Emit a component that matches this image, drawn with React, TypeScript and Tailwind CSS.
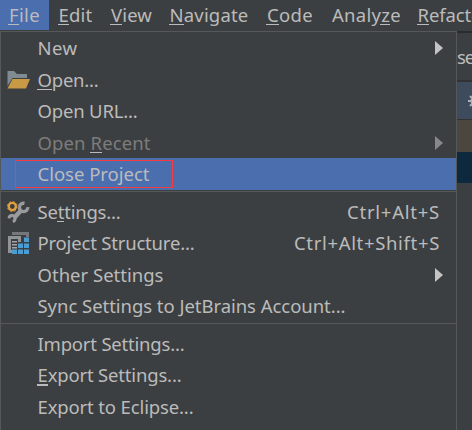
import { useLayoutEffect, useRef, type ReactNode } from "react";
import clsx from "clsx";

// Text run tracked so that it fills a fixed advance width.
function Label({ text, mnemonic = -1, width, thick = false }: { text: string; mnemonic?: number; width: number; thick?: boolean }) {
  const ref = useRef<HTMLSpanElement>(null);
  useLayoutEffect(() => {
    const el = ref.current;
    if (!el) return;
    el.style.letterSpacing = "0px";
    const natural = el.getBoundingClientRect().width;
    el.style.letterSpacing = `${(width - natural) / text.length}px`;
  }, [text, width]);
  return (
    <span ref={ref} className="inline-block whitespace-pre">
      {mnemonic < 0 ? (
        text
      ) : (
        <>
          {text.slice(0, mnemonic)}
          <span className={clsx("relative inline-block after:absolute after:-left-px after:right-0 after:bg-[#bbbbbb]", thick ? "after:bottom-[2px] after:h-[2px]" : "after:bottom-[3px] after:h-px")}>
            {text[mnemonic]}
          </span>
          {text.slice(mnemonic + 1)}
        </>
      )}
    </span>
  );
}

function FolderIcon() {
  return (
    <svg width="24" height="20" viewBox="0 0 24 20">
      <path d="M.5 1H7l3 3h10v4H5.500L.500 16z" fill="#7f8b91" />
      <path d="M5.500 9H23l-4 9.500H.500z" fill="#c99a45" />
    </svg>
  );
}

function SettingsIcon() {
  return (
    <svg width="24" height="24" viewBox="0 0 24 24" fill="none">
      <path d="M14.500 10 7.500 17.500" stroke="#999b9d" strokeWidth="4.500" />
      <path d="M17.500 3.300A4.200 4.200 0 1 0 20.800 7.200" stroke="#999b9d" strokeWidth="3.400" />
      <path d="M2 18.300A3 3 0 1 1 5.800 21.500" stroke="#999b9d" strokeWidth="3" />
      <circle cx="5.300" cy="6.500" r="6" fill="#3c3f41" />
      <circle cx="5.300" cy="6.500" r="3.600" stroke="#e0a03f" strokeWidth="2.400" />
      <circle cx="5.300" cy="6.500" r="5" stroke="#c88a35" strokeWidth="1" strokeDasharray="2 1.927" />
    </svg>
  );
}

function StructureIcon() {
  return (
    <svg width="24" height="24" viewBox="0 0 24 24">
      <path d="M5 4V1h17v5h-3V4z" fill="#74787b" />
      <path d="M1 5h13v6h-3V8H4v11h1v3H1z" fill="#919497" />
      <path d="M5 10h5v1.500H5zM5 13h5v1.500H5zM5 16h5v1.500H5z" fill="#a3a5a7" />
      <path d="M17 6.500h5v4.500h-5zM11 12.500h5V17h-5zM17 12.500h5V17h-5zM5 18.500h5V23H5zM11 18.500h5V23h-5zM17 18.500h5V23h-5z" fill="#4b9cd3" />
    </svg>
  );
}

interface RowProps {
  text: string;
  width: number;
  mnemonic?: number;
  thick?: boolean;
  icon?: ReactNode;
  shortcut?: string;
  shortcutWidth?: number;
  arrow?: boolean;
  disabled?: boolean;
  height?: string;
}

function Row({ text, width, mnemonic, thick, icon, shortcut, shortcutWidth = 0, arrow, disabled, height = "h-8" }: RowProps) {
  return (
    <div className={clsx("flex shrink-0 items-center pl-[6px]", height, disabled && "text-[#7c7c7c]")}>
      <div className="w-[30.5px] shrink-0">{icon}</div>
      <div className="grow">
        <Label text={text} width={width} mnemonic={mnemonic} thick={thick} />
      </div>
      {shortcut && (
        <div className="mr-[16px]">
          <Label text={shortcut} width={shortcutWidth} />
        </div>
      )}
      {arrow && (
        <svg className="mr-[13px]" width="8" height="14" viewBox="0 0 8 14">
          <path d="M0 0 8 7 0 14z" fill={disabled ? "#888888" : "#c4c4c4"} />
        </svg>
      )}
    </div>
  );
}

const Separator = () => (
  <div className="h-[6px] shrink-0 pt-px">
    <div className="h-px bg-[#555759]" />
  </div>
);

export default function App() {
  return (
    <div className="h-[430px] w-[472px] overflow-hidden bg-[#3c3f41] font-['Noto_Sans',sans-serif] text-[18.5px] leading-[26px] text-[#bbbbbb]">
      <nav className="flex h-[31px] items-start">
        <div className="h-[30px] w-[49px] shrink-0 bg-[#4b6eaf] pl-[9px] pt-[2px]"><Label text="File" width={31} mnemonic={0} /></div>
        <div className="w-[52px] shrink-0 pl-[9.5px] pt-[2px]"><Label text="Edit" width={34} mnemonic={0} /></div>
        <div className="w-[59px] shrink-0 pl-[10px] pt-[2px]"><Label text="View" width={41} mnemonic={0} /></div>
        <div className="w-[97px] shrink-0 pl-[9.5px] pt-[2px]"><Label text="Navigate" width={79} mnemonic={0} /></div>
        <div className="w-[65px] shrink-0 pl-[10px] pt-[2px]"><Label text="Code" width={46} mnemonic={0} /></div>
        <div className="w-[86px] shrink-0 pl-[10px] pt-[2px]"><Label text="Analyze" width={69} mnemonic={5} /></div>
        <div className="w-[90px] shrink-0 pl-[9.5px] pt-[2px]"><Label text="Refactor" width={72} mnemonic={0} /></div>
      </nav>
      <div className="flex h-[399px]">
        <div className="flex w-[457px] shrink-0 flex-col border-l border-r border-t border-[#555759]">
          <Row text="New" width={40} arrow />
          <Row text="Open..." width={61} mnemonic={0} icon={<FolderIcon />} height="h-[31px]" />
          <Row text="Open URL..." width={100} />
          <Row text="Open Recent" width={113} mnemonic={5} arrow disabled height="h-[31px]" />
          <div className="relative h-8 shrink-0 bg-[#4b6eaf]">
            <Row text="Close Project" width={112} />
            <div className="absolute left-[14px] top-[2px] h-[28px] w-[158px] border border-[#f93a3f]" />
          </div>
          <Separator />
          <Row text="Settings..." width={83} mnemonic={2} icon={<SettingsIcon />} height="h-[31px]" shortcut="Ctrl+Alt+S" shortcutWidth={93} />
          <Row text="Project Structure..." width={157} icon={<StructureIcon />} height="h-8" shortcut="Ctrl+Alt+Shift+S" shortcutWidth={146} />
          <Row text="Other Settings" width={126} arrow height="h-[31px]" />
          <Row text="Sync Settings to JetBrains Account..." width={308} />
          <Separator />
          <Row text="Import Settings..." width={147} height="h-[31px]" />
          <Row text="Export Settings..." width={144} mnemonic={0} thick />
          <Row text="Export to Eclipse..." width={156} height="h-[31px]" />
        </div>
        <div className="flex w-[15px] shrink-0 flex-col overflow-hidden">
          <div className="h-[2px] shrink-0 bg-[#292b2d]" />
          <div className="h-[47px] shrink-0 pt-[11px]"><Label text="se" width={17} /></div>
          <div className="h-[2px] shrink-0 bg-[#303234]" />
          <div className="flex h-[37px] shrink-0 items-center bg-[#3d4b5c] pl-[11px]">
            <svg className="shrink-0" width="14" height="14" viewBox="0 0 14 14">
              <circle cx="7" cy="7" r="3.500" fill="none" stroke="#afb1b3" strokeWidth="2" />
              <path d="M0 7h4M10 7h4M7 0v4M7 10v4M2 2l3 3M9 9l3 3M12 2 9 5M5 9l-3 3" stroke="#afb1b3" strokeWidth="2" />
            </svg>
          </div>
          <div className="h-px shrink-0 bg-[#303234]" />
          <div className="h-[32px] shrink-0 bg-[#4b473f]" />
          <div className="h-[31px] shrink-0 bg-[#0d293e]" />
        </div>
      </div>
    </div>
  );
}
